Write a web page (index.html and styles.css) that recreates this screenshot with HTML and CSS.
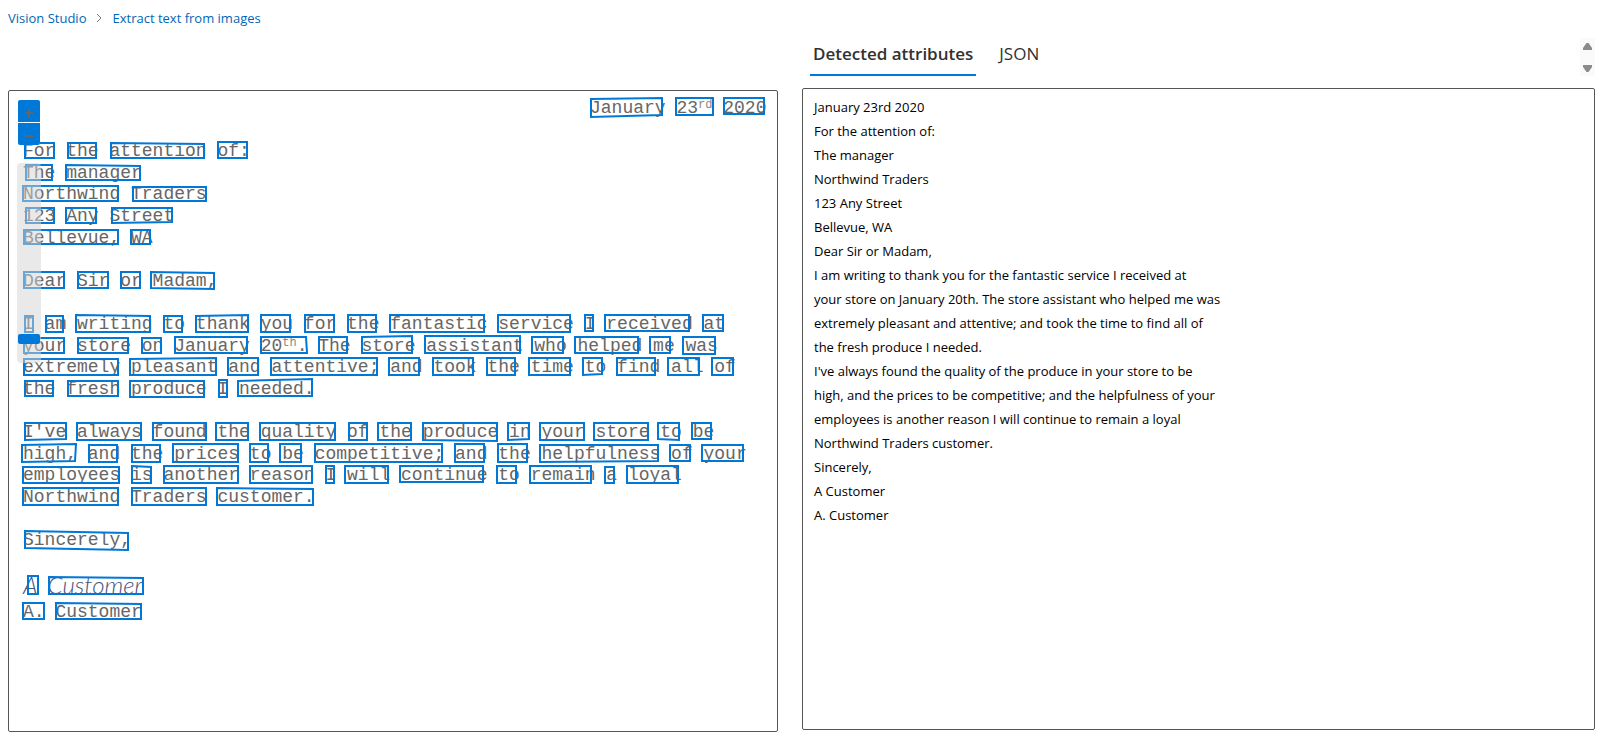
FILE: index.html
```html
<!DOCTYPE html>
<html lang="en">
<head>
<meta charset="utf-8">
<title>Extract text from images - Vision Studio</title>
<link rel="stylesheet" href="styles.css">
</head>
<body>
<nav class="breadcrumb" aria-label="Breadcrumb">
  <a href="#">Vision Studio</a>
  <svg class="chevron" viewBox="0 0 6 10" aria-hidden="true"><path d="M1 1l4 4-4 4"/></svg>
  <a href="#">Extract text from images</a>
</nav>
<main class="columns">
  <section class="viewer" aria-label="Document">
    <div class="letter">
      <p class="date">January 23<span class="sup">rd</span> 2020</p>
      <p>For the attention of:<br>The manager<br>Northwind Traders<br>123 Any Street<br>Bellevue, WA</p>
      <p>Dear Sir or Madam,</p>
      <p>I am writing to thank you for the fantastic service I received at<br>your store on January 20<span class="sup">th</span>. The store assistant who helped me was<br>extremely pleasant and attentive; and took the time to find all of<br>the fresh produce I needed.</p>
      <p>I've always found the quality of the produce in your store to be<br>high, and the prices to be competitive; and the helpfulness of your<br>employees is another reason I will continue to remain a loyal<br>Northwind Traders customer.</p>
      <p>Sincerely,</p>
      <p class="signature"><span>A</span> <span>Customer</span></p>
      <p>A. Customer</p>
    </div>
    <svg class="regions" viewBox="9 91 768 640" aria-hidden="true">
      <path d="M591 99L662 98V115L591 117ZM676 98H713V115H676ZM724 98H764V114H724Z"/>
      <path d="M25 143H54V158H25ZM68 143H96V158H68ZM111 143L204 144V158H111ZM218 142H247V158H218Z"/>
      <path d="M26 165H52V180H26ZM66 165L140 166V180H66Z"/>
      <path d="M23 186H118V201H23ZM133 187H206V201H133Z"/>
      <path d="M26 208H54V223H26ZM66 208H96V223H66ZM112 208H172V222L112 223Z"/>
      <path d="M24 230H118V244H24ZM131 230H150V244H131Z"/>
      <path d="M24 272H64V288H24ZM78 272H108V288H78ZM121 272H140V288H121ZM151 272L214 273V289L151 288Z"/>
      <path d="M25 316H33V332H25ZM46 316H63V332H46ZM76 315L150 316V332H76ZM164 316H182V332H164ZM196 316L248 315V332H196ZM261 315H290V332H261ZM305 315H334V332H305ZM348 315H376V332H348ZM390 315H484V332H390ZM498 315H570V332H498ZM585 315H593V331H585ZM605 315H689V331H605ZM703 315H723V331H703Z"/>
      <path d="M24 338H64V353H24ZM78 338H128V353H78ZM142 338H161V353H142ZM175 337H247V353H175ZM261 337H306L307 353H261ZM319 337H347V353H319ZM362 337L412 336V353H362ZM425 336H520V353H425ZM532 337H563V353H532ZM575 337H638V353H575ZM650 337H670V353H650ZM683 337H715V354H683Z"/>
      <path d="M24 359H118V375H24ZM130 359L216 358V375H130ZM228 358H258V375H228ZM271 358H377V375H271ZM389 358H419V375H389ZM433 358H473V375H433ZM487 358H515V375H487ZM529 358H570V375H529ZM583 358H602V374L583 375ZM617 358H655V375H617ZM668 358H699V375H668ZM712 358H733V375H712Z"/>
      <path d="M25 381H53V396H25ZM68 381H118V396H68ZM130 381H204V397H130ZM219 380H227V397H219ZM238 381L312 379V396H238Z"/>
      <path d="M25 423H66V439L25 440ZM77 423H141V440H77ZM153 423H206V440H153ZM216 423H248V440H216ZM260 423H335V440H260ZM349 423H367V440H349ZM378 423H411V440H378ZM423 423H497V441L423 440ZM508 423H529V439L508 440ZM540 423H584V440H540ZM594 423H648V440H594ZM658 423H679V440L658 439ZM692 423H711V439H692Z"/>
      <path d="M22 445L76 444L75 461L22 462ZM89 445H117V462H89ZM132 445H160V462H132ZM173 444H238V462H173ZM250 444H268V462H250ZM280 444H301V462H280ZM315 444H442V462H315ZM455 444H484V462H455ZM498 444H527V462H498ZM540 445H658V461L540 462ZM670 445H690V461H670ZM702 445H743V461H702Z"/>
      <path d="M23 467H119V483H23ZM132 466L151 467V483H132ZM164 466H238V483H164ZM250 466H312V483H250ZM326 466H334V483H326ZM345 466H388V483H345ZM400 466H483V482H400ZM497 466H516V483H497ZM530 466H591V483H530ZM605 467H614V483H605ZM627 466H678V483H627Z"/>
      <path d="M23 488H118V505H23ZM132 488H206V505H132ZM217 488L313 489V505H217Z"/>
      <path d="M25 531L128 533V550L25 548Z"/>
      <path d="M28 576H38V594H28ZM49 577L143 578V594H49Z"/>
      <path d="M23 603H44V619H23ZM56 603L141 604V619H56Z"/>
    </svg>
    <div class="zoom">
      <button type="button" aria-label="Zoom in"><svg viewBox="0 0 8 8"><path d="M4 0V8M0 4H8"/></svg></button>
      <button type="button" aria-label="Zoom out"><svg viewBox="0 0 8 8"><path d="M0 4H8"/></svg></button>
    </div>
    <input class="zoom-slider" type="range" min="0" max="100" value="10" aria-label="Zoom level">
  </section>
  <section class="results">
    <div class="tabbar">
      <div class="tabs" role="tablist">
        <button class="tab selected" type="button" role="tab" aria-selected="true">Detected attributes</button>
        <button class="tab" type="button" role="tab" aria-selected="false">JSON</button>
      </div>
      <div class="scroller">
        <button type="button" aria-label="Scroll up"><svg viewBox="0 0 9 7"><path d="M3.500 0h2L9 5v2H0V5z"/></svg></button>
        <button type="button" aria-label="Scroll down"><svg viewBox="0 0 9 7"><path d="M3.500 7h2L9 2V0H0v2z"/></svg></button>
      </div>
    </div>
    <div class="output" role="tabpanel">
      <p>January 23rd 2020</p>
      <p>For the attention of:</p>
      <p>The manager</p>
      <p>Northwind Traders</p>
      <p>123 Any Street</p>
      <p>Bellevue, WA</p>
      <p>Dear Sir or Madam,</p>
      <p>I am writing to thank you for the fantastic service I received at</p>
      <p>your store on January 20th. The store assistant who helped me was</p>
      <p>extremely pleasant and attentive; and took the time to find all of</p>
      <p>the fresh produce I needed.</p>
      <p>I've always found the quality of the produce in your store to be</p>
      <p>high, and the prices to be competitive; and the helpfulness of your</p>
      <p>employees is another reason I will continue to remain a loyal</p>
      <p>Northwind Traders customer.</p>
      <p>Sincerely,</p>
      <p>A Customer</p>
      <p>A. Customer</p>
    </div>
  </section>
</main>
</body>
</html>
```
FILE: styles.css
```css
* { box-sizing: border-box; }
body {
  display: flex;
  flex-direction: column;
  min-height: 100vh;
  margin: 0;
  padding: 0 12px 12px 8px;
  background: #fff;
  color: #000;
  font-family: "Segoe UI", "Open Sans", sans-serif;
  font-size: 13px;
}
p { margin: 0; }
button { margin: 0; padding: 0; border: 0; background: none; font: inherit; color: inherit; }

.breadcrumb { display: flex; align-items: center; gap: 10px; height: 38px; padding-bottom: 2px; }
.breadcrumb a { color: #0067b8; text-decoration: none; }
.chevron { width: 6px; height: 10px; fill: none; stroke: #767676; }

.columns { display: grid; grid-template-columns: 770fr 793fr; gap: 24px; flex: 1; }

.viewer {
  position: relative;
  margin-top: 52px;
  padding: 7px 14px;
  border: 1px solid #555;
  border-radius: 2px;
  overflow: hidden;
}
.letter {
  color: #666;
  font-family: "Courier New", "Liberation Mono", monospace;
  font-size: 18px;
  line-height: 1.2;
  white-space: nowrap;
}
.letter p { margin-bottom: 1.2em; }
.letter .date { padding-left: 567px; }
.sup { font-size: 12px; line-height: 0; vertical-align: 5px; color: #888; }
.letter .signature {
  display: flex;
  gap: 10px;
  margin-bottom: 5px;
  color: #44547f;
  font-family: "Segoe Script", Lato, sans-serif;
  font-size: 24px;
  font-style: italic;
  font-weight: 300;
  line-height: 24px;
}
.regions { position: absolute; top: 0; left: 0; width: 768px; height: 640px; fill: none; stroke: #0078d7; stroke-width: 2; }

.zoom { position: absolute; top: 9px; left: 9px; display: grid; gap: 1px; background: #fff; }
.zoom button { display: grid; place-items: center; width: 22px; height: 22px; background: #0078d7; }
.zoom button:first-child { border-radius: 2px 2px 0 0; }
.zoom button:last-child { border-radius: 0 0 2px 2px; }
.zoom svg { width: 8px; height: 8px; margin-top: 3px; stroke: #666; stroke-width: 2; }
.zoom-slider {
  position: absolute;
  top: 72px;
  left: 8px;
  width: 24px;
  height: 200px;
  margin: 0;
  border-radius: 4px;
  background: rgba(212, 212, 212, 0.5);
  appearance: none;
  writing-mode: vertical-lr;
  direction: rtl;
}
.zoom-slider::-webkit-slider-thumb { appearance: none; width: 22px; height: 10px; border-radius: 2px; background: #0078d7; }

.results { display: flex; flex-direction: column; margin-bottom: 2px; }
.tabbar { display: flex; justify-content: space-between; height: 38px; margin-bottom: 12px; padding-left: 8px; }
.tabs { display: flex; gap: 20px; }
.tab { padding: 3px 3px 7px; border-bottom: 2px solid transparent; color: #323130; font-size: 17px; line-height: 26px; }
.tab.selected { border-bottom-color: #0078d7; font-weight: 600; }
.scroller { display: grid; align-content: start; gap: 7px; width: 15px; padding-top: 1px; background: #fafafa; }
.scroller button { display: grid; place-items: center; height: 15px; }
.scroller svg { width: 9px; height: 7px; fill: #8a8a8a; }
.output { flex: 1; padding: 6px 11px; border: 1px solid #555; border-radius: 2px; line-height: 24px; }
```
